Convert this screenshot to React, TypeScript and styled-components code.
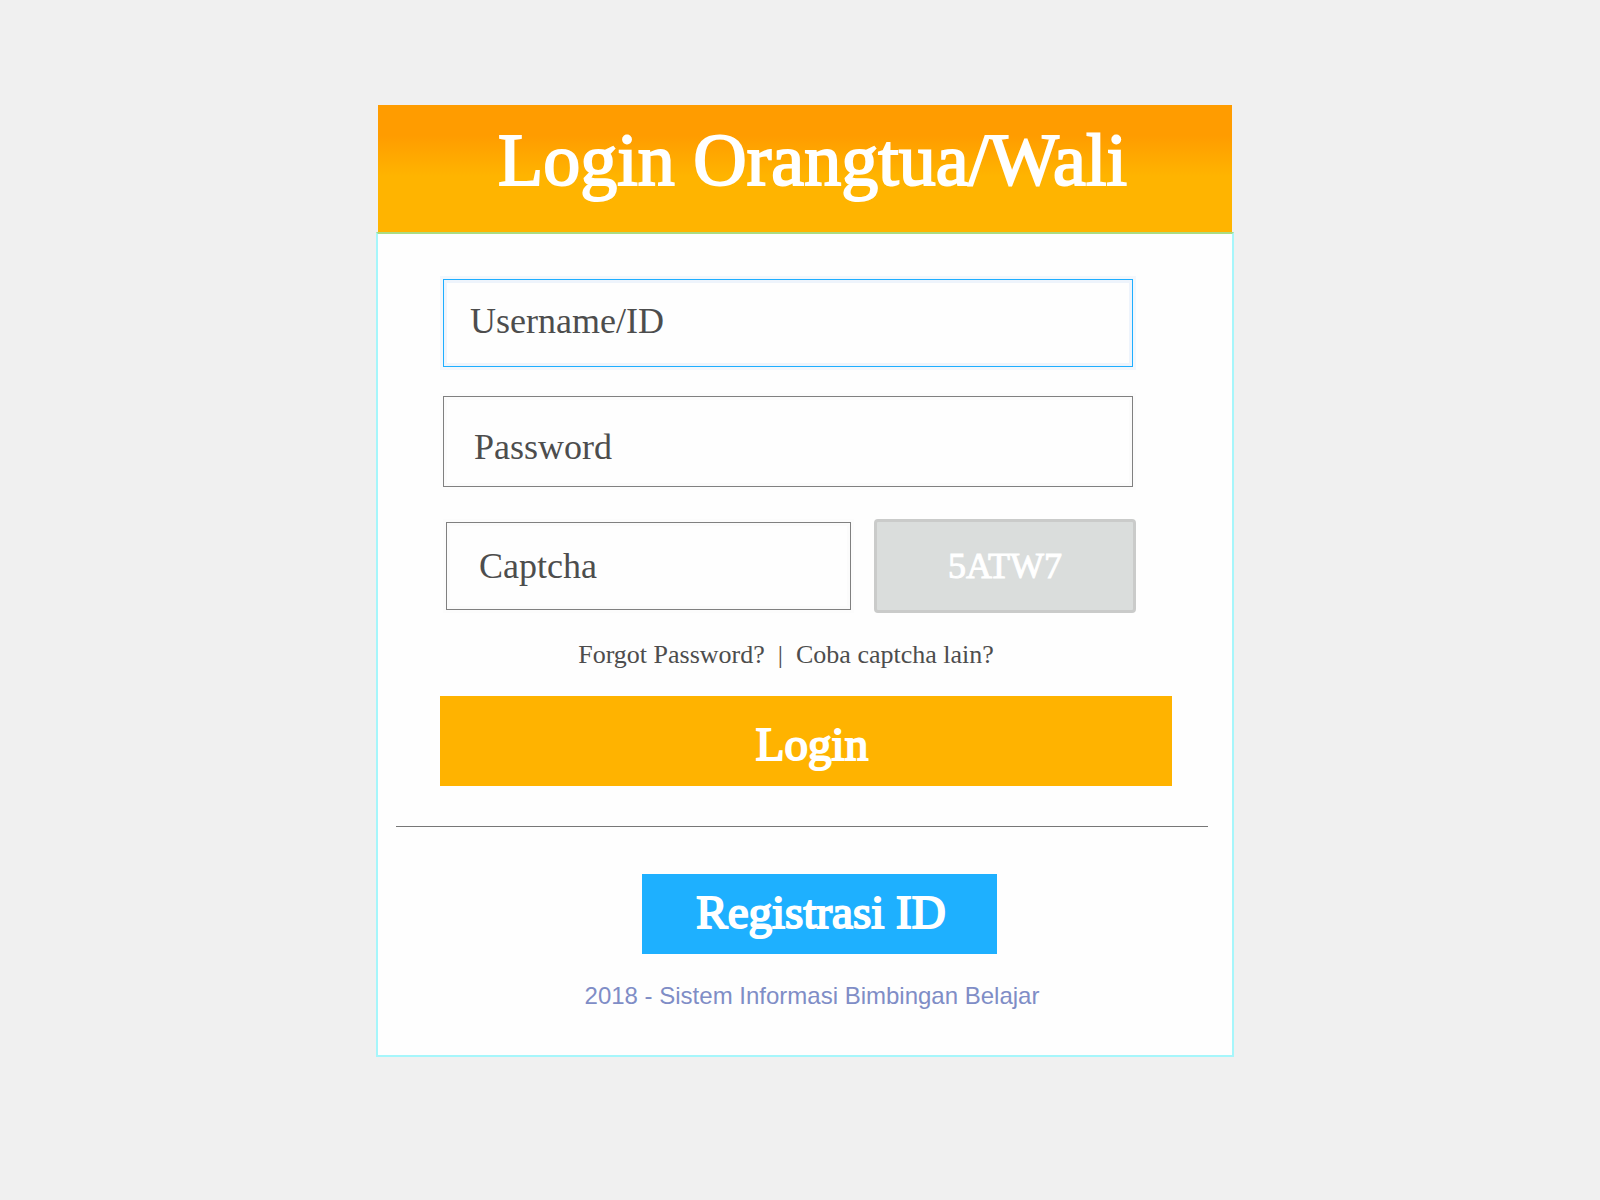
import React from "react";
import styled, { createGlobalStyle } from "styled-components";

const serif = `"Liberation Serif", "Times New Roman", serif`;
const sans = `"Liberation Sans", Arial, sans-serif`;

const GlobalStyle = createGlobalStyle`
  *, *::before, *::after { box-sizing: border-box; }
  body { margin: 0; background: #f0f0f0; font-family: ${serif}; }
`;

const Page = styled.main`
  padding: 105px 366px 143px 376px;
`;

const Header = styled.header`
  margin: 0 2px;
  height: 127px;
  padding: 0 0 18px 15px;
  display: flex;
  align-items: center;
  justify-content: center;
  background: linear-gradient(#ff9c00 24%, #ffb400 56%);
`;

const Title = styled.h1`
  margin: 0;
  font-size: 74px;
  line-height: 84px;
  font-weight: 400;
  white-space: nowrap;
  color: #fff;
  -webkit-text-stroke: 2px #fff;
`;

const Panel = styled.section`
  background: #fefefe;
  border: 2px solid #a6f6fb;
  border-top-color: #abdc82;
`;

const Form = styled.form`
  padding: 45px 60px 40px 62px;
`;

const Fields = styled.div`
  display: flex;
  flex-direction: column;
  gap: 29px;
  margin: 0 39px 32px 3px;
`;

const Field = styled.input<{ $active?: boolean; $height?: number; $pad: string }>`
  width: 100%;
  min-width: 0;
  height: ${(p) => p.$height ?? 88}px;
  padding: ${(p) => p.$pad};
  border: 1px solid ${(p) => (p.$active ? "#1eaeff" : "#808080")};
  border-radius: 0;
  outline: none;
  background: #fefefe;
  box-shadow: ${(p) =>
    p.$active
      ? "0 0 0 3px #f3f7fc, inset 0 0 0 3px #eef4fc"
      : "0 0 0 3px #fcfcfc, inset 0 0 0 3px #fbfbfb"};
  font: 400 36px/42px ${serif};
  color: #4d4d4d;
  &::placeholder { color: #4d4d4d; opacity: 1; }
`;

const CaptchaRow = styled.div`
  display: grid;
  grid-template-columns: 405fr 262fr;
  align-items: center;
  gap: 23px;
  margin: 0 36px 0 6px;
`;

const CaptchaCode = styled.output`
  height: 94px;
  display: flex;
  align-items: center;
  justify-content: center;
  border: 3px solid #cacbca;
  border-radius: 4px;
  background: #dadddc;
  color: #fff;
  font-size: 36px;
  line-height: 42px;
  -webkit-text-stroke: 1px #fff;
`;

const Links = styled.nav`
  display: flex;
  justify-content: center;
  gap: 13px;
  padding-right: 40px;
  font-size: 26px;
  line-height: 83px;
  white-space: nowrap;
  color: #4d4d4d;
`;

const TextLink = styled.a`
  color: inherit;
  text-decoration: none;
`;

const Button = styled.button`
  display: block;
  border: 0;
  padding: 0;
  color: #fff;
  font: 400 47px/54px ${serif};
  -webkit-text-stroke: 2px #fff;
  cursor: pointer;
`;

const LoginButton = styled(Button)`
  width: 100%;
  height: 90px;
  padding: 5px 0 0 12px;
  background: #ffb300;
`;

const RegisterButton = styled(Button)`
  width: 355px;
  height: 80px;
  padding: 0 0 5px 4px;
  background: #1eb0ff;
`;

const Divider = styled.hr`
  height: 1px;
  margin: 0 24px 0 18px;
  border: 0;
  background: #777;
`;

const Footer = styled.footer`
  padding: 47px 0 45px 28px;
  display: flex;
  flex-direction: column;
  align-items: center;
  gap: 28px;
`;

const Copyright = styled.p`
  margin: 0 14px 0 0;
  font: 400 24px/28px ${sans};
  color: #7f8dc6;
`;

export default function App() {
  return (
    <>
      <GlobalStyle />
      <Page>
        <Header>
          <Title>Login Orangtua/Wali</Title>
        </Header>
        <Panel>
          <Form onSubmit={(e) => e.preventDefault()}>
            <Fields>
              <Field $active $pad="0 26px 4px" aria-label="Username/ID" placeholder="Username/ID" />
              <Field $height={91} $pad="10px 30px 0" type="password" aria-label="Password" placeholder="Password" />
            </Fields>
            <CaptchaRow>
              <Field $pad="0 32px" aria-label="Captcha" placeholder="Captcha" />
              <CaptchaCode>5ATW7</CaptchaCode>
            </CaptchaRow>
            <Links>
              <TextLink href="#forgot">Forgot Password?</TextLink>
              <span>|</span>
              <TextLink href="#captcha">Coba captcha lain?</TextLink>
            </Links>
            <LoginButton type="submit">Login</LoginButton>
          </Form>
          <Divider />
          <Footer>
            <RegisterButton type="button">Registrasi ID</RegisterButton>
            <Copyright>2018 - Sistem Informasi Bimbingan Belajar</Copyright>
          </Footer>
        </Panel>
      </Page>
    </>
  );
}
